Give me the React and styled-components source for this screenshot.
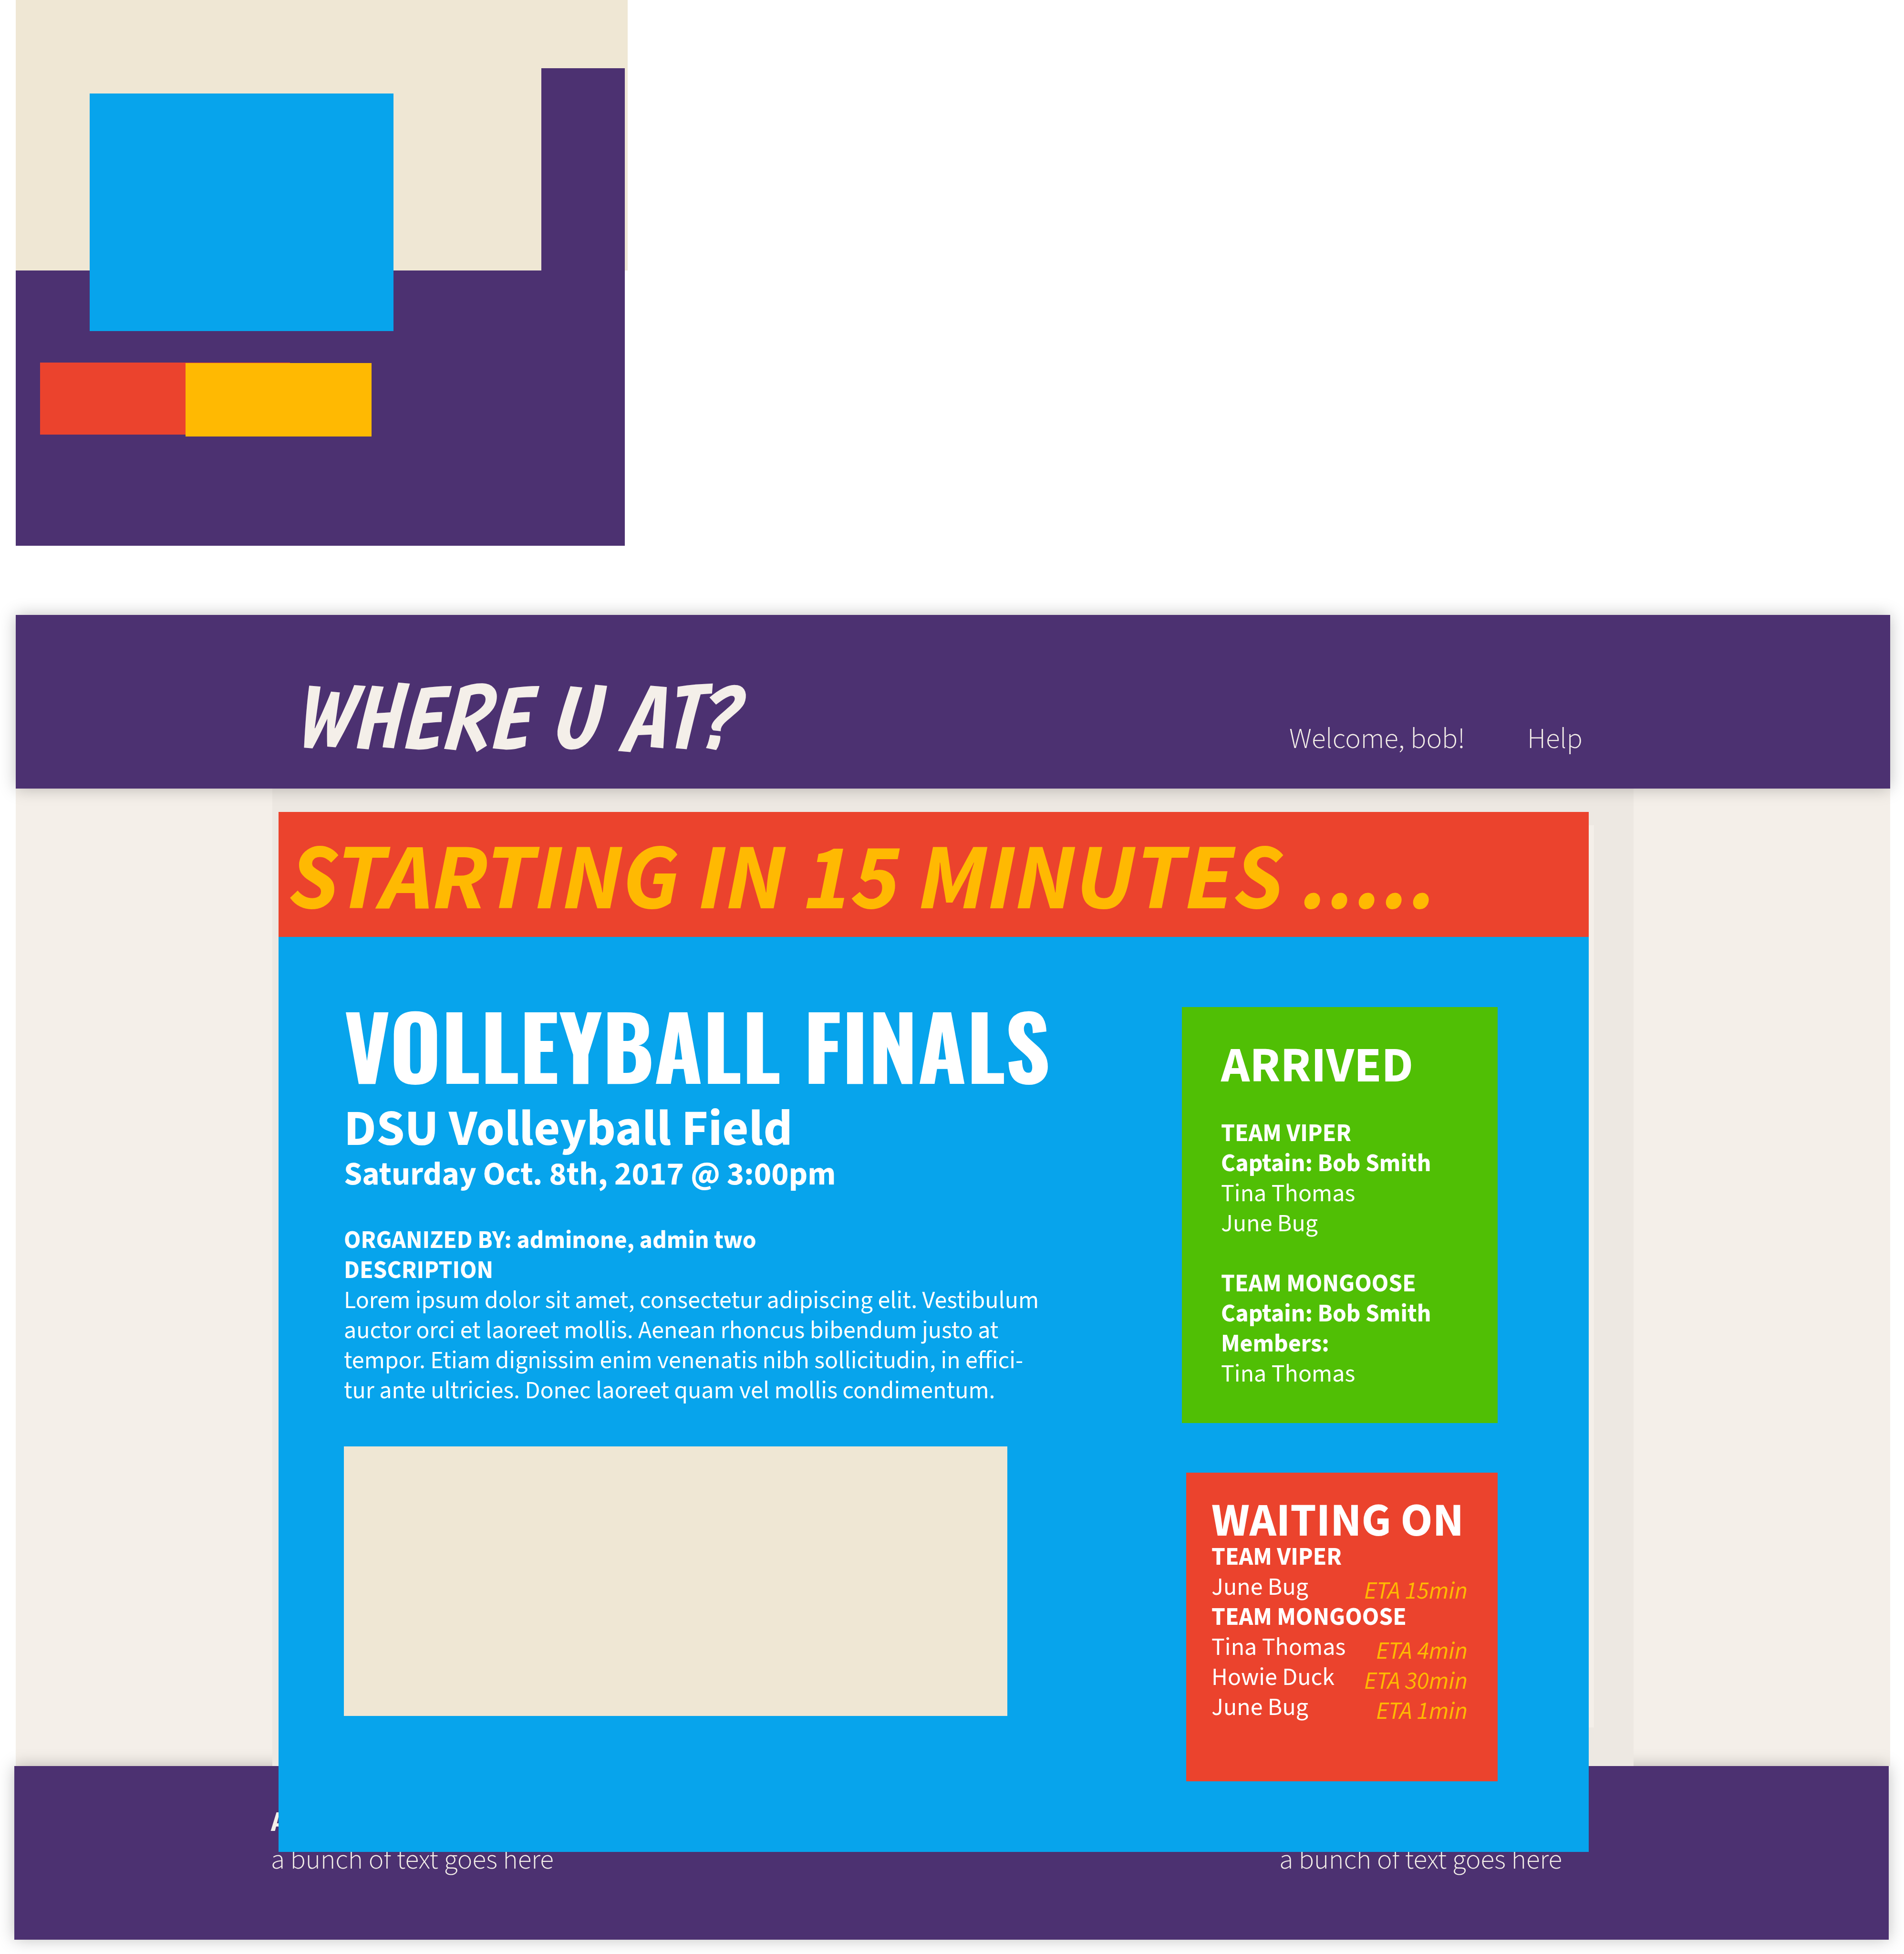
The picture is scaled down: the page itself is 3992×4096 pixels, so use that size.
import React from "react";
import styled, { createGlobalStyle } from "styled-components";

const color = {
  purple: "#4c3171",
  cream: "#efe7d4",
  paper: "#f4efe9",
  band: "#ede8e2",
  blue: "#07a4ec",
  red: "#eb432d",
  yellow: "#ffb902",
  green: "#50bf05",
};

const sans = '"Source Sans Pro", "Source Sans 3", "Noto Sans CJK SC", "Open Sans", sans-serif';
const narrow = `"Oswald", "Roboto Condensed", ${sans}`;
const comic = `"Boogaloo", "Bangers", ${sans}`;

const GlobalStyle = createGlobalStyle`
  *, *::before, *::after { box-sizing: border-box; }
  body { margin: 0; background: #fff; font-family: ${sans}; }
  h1, h2, h3, p { margin: 0; }
`;

const Page = styled.div`
  padding: 0 29px 30px 33px;
  overflow: hidden;
`;

const Palette = styled.section`
  display: grid;
  width: 1283px;
  margin-bottom: 145px;
  grid-template-columns: 51px 104px 201px 219px 171px 46px 310px 175px 6px;
  grid-template-rows: 143px 53px 371px 127px 66px 1px 150px 4px 229px;
`;

const Swatch = styled.div`
  grid-area: ${(p) => p.$area};
  background: ${(p) => color[p.$tone]};
`;

const Bar = styled.div`
  display: flex;
  justify-content: center;
  height: 364px;
  background: ${color.purple};
  color: ${color.paper};
  box-shadow: 0 0 32px rgba(0, 0, 0, 0.25);
`;

const Header = styled(Bar)`
  position: relative;
  z-index: 1;
`;

const Container = styled.div`
  width: 2854px;
  display: flex;
`;

const HeaderRow = styled(Container)`
  align-items: baseline;
  justify-content: space-between;
  padding: 93px 107px 0 37px;
`;

const Logo = styled.h1`
  font: italic 400 189px/240px ${comic};
`;

const Nav = styled.nav`
  display: flex;
  gap: 130px;
`;

const NavLink = styled.a`
  color: inherit;
  text-decoration: none;
  font-weight: 300;
  font-size: 61px;
  line-height: 80px;
`;

const Body = styled.main`
  display: flex;
  justify-content: center;
  background: ${color.paper};
`;

const Band = styled.div`
  display: grid;
  width: 2854px;
  background: ${color.band};
`;

const Sheet = styled.div`
  grid-area: 1 / 1;
  margin: 77px 83px 81px 13px;
  background: ${color.paper};
`;

const Card = styled.article`
  grid-area: 1 / 1;
  position: relative;
  z-index: 2;
  margin: 49px 94px -180px 13px;
  background: ${color.blue};
  color: #fff;
`;

const Alert = styled.p`
  padding: 19px 22px 0;
  background: ${color.red};
  color: ${color.yellow};
  font-size: 196px;
  font-weight: 700;
  font-style: italic;
  line-height: 243px;
  white-space: nowrap;
`;

const Columns = styled.div`
  display: flex;
  justify-content: space-between;
  padding: 147px 191px 148px 137px;
`;

const Details = styled.section`
  width: 1500px;
`;

const Title = styled.h2`
  font: 700 185px/154px ${narrow};
  margin-bottom: 40px;
  white-space: nowrap;
`;

const Place = styled.h3`
  font-size: 107px;
  line-height: 124px;
`;

const When = styled.p`
  font-size: 69px;
  font-weight: 700;
  line-height: 66px;
  margin-bottom: 74px;
`;

const Line = styled.p`
  font-size: 52px;
  line-height: 63px;
  font-weight: ${(p) => (p.$strong ? 700 : 400)};
  white-space: nowrap;
`;

const MapBox = styled.div`
  width: 1391px;
  height: 565px;
  margin-top: 85px;
  background: ${color.cream};
`;

const Side = styled.aside`
  display: flex;
  flex-direction: column;
  align-items: flex-end;
  gap: 104px;
`;

const Panel = styled.section`
  width: ${(p) => p.$width};
  padding: ${(p) => p.$pad};
  background: ${(p) => color[p.$tone]};
`;

const PanelTitle = styled.h3`
  font-size: ${(p) => p.$size};
  line-height: ${(p) => p.$line};
  white-space: nowrap;
`;

const Teams = styled.div`
  display: flex;
  flex-direction: column;
  gap: ${(p) => p.$gap};
  margin-top: ${(p) => p.$top};
`;

const Waiting = styled.div`
  display: flex;
  justify-content: space-between;
`;

const Eta = styled(Line)`
  color: ${color.yellow};
  font-style: italic;
  padding-top: 8px;
  margin-bottom: -8px;
`;

const Footer = styled(Bar)`
  margin: 0 3px 0 -3px;
`;

const FooterRow = styled(Container)`
  justify-content: space-between;
  padding: 79px 147px 0 0;
`;

const FooterBlock = styled.div`
  display: flex;
  flex-direction: column;
  justify-content: flex-end;
  height: 158px;
  font-size: 59px;
  font-weight: 300;
  line-height: 79px;
`;

const FooterHeading = styled.h3`
  font-size: 59px;
`;

const description = [
  "Lorem ipsum dolor sit amet, consectetur adipiscing elit. Vestibulum",
  "auctor orci et laoreet mollis. Aenean rhoncus bibendum justo at",
  "tempor. Etiam dignissim enim venenatis nibh sollicitudin, in effici-",
  "tur ante ultricies. Donec laoreet quam vel mollis condimentum.",
];

const arrived = [
  { team: "TEAM VIPER", bold: ["Captain: Bob Smith"], members: ["Tina Thomas", "June Bug"] },
  { team: "TEAM MONGOOSE", bold: ["Captain: Bob Smith", "Members:"], members: ["Tina Thomas"] },
];

const waiting = [
  { team: "TEAM VIPER", members: [["June Bug", "ETA 15min"]] },
  {
    team: "TEAM MONGOOSE",
    members: [
      ["Tina Thomas", "ETA 4min"],
      ["Howie Duck", "ETA 30min"],
      ["June Bug", "ETA 1min"],
    ],
  },
];

export default function App() {
  return (
    <Page>
      <GlobalStyle />
      <Palette aria-label="Colour palette">
        <Swatch $tone="cream" $area="1 / 1 / 4 / 10" />
        <Swatch $tone="purple" $area="4 / 1 / 10 / 9" />
        <Swatch $tone="purple" $area="2 / 8 / 4 / 9" />
        <Swatch $tone="blue" $area="3 / 3 / 5 / 7" />
        <Swatch $tone="red" $area="6 / 2 / 8 / 5" />
        <Swatch $tone="yellow" $area="7 / 4 / 9 / 6" />
      </Palette>

      <Header as="header">
        <HeaderRow>
          <Logo>WHERE U AT?</Logo>
          <Nav>
            <NavLink href="#account">Welcome, bob!</NavLink>
            <NavLink href="#help">Help</NavLink>
          </Nav>
        </HeaderRow>
      </Header>

      <Body>
        <Band>
          <Sheet />
          <Card>
            <Alert>STARTING IN 15 MINUTES .....</Alert>
            <Columns>
              <Details>
                <Title>VOLLEYBALL FINALS</Title>
                <Place>DSU Volleyball Field</Place>
                <When>Saturday Oct. 8th, 2017 @ 3:00pm</When>
                <Line $strong>ORGANIZED BY: adminone, admin two</Line>
                <Line $strong>DESCRIPTION</Line>
                {description.map((line) => (
                  <Line key={line}>{line}</Line>
                ))}
                <MapBox />
              </Details>
              <Side>
                <Panel $tone="green" $width="662px" $pad="60px 80px 71px 82px">
                  <PanelTitle $size="105px" $line="127px">ARRIVED</PanelTitle>
                  <Teams $gap="63px" $top="47px">
                    {arrived.map((group) => (
                      <div key={group.team}>
                        <Line $strong>{group.team}</Line>
                        {group.bold.map((text) => (
                          <Line key={text} $strong>{text}</Line>
                        ))}
                        {group.members.map((name) => (
                          <Line key={name}>{name}</Line>
                        ))}
                      </div>
                    ))}
                  </Teams>
                </Panel>
                <Panel $tone="red" $width="653px" $pad="57px 63px 123px 53px">
                  <PanelTitle $size="98px" $line="89px">WAITING ON</PanelTitle>
                  <Teams $gap="0" $top="0">
                    {waiting.map((group) => (
                      <div key={group.team}>
                        <Line $strong>{group.team}</Line>
                        {group.members.map(([name, eta]) => (
                          <Waiting key={name}>
                            <Line>{name}</Line>
                            <Eta>{eta}</Eta>
                          </Waiting>
                        ))}
                      </div>
                    ))}
                  </Teams>
                </Panel>
              </Side>
            </Columns>
          </Card>
        </Band>
      </Body>

      <Footer as="footer">
        <FooterRow>
          <FooterBlock>
            <FooterHeading>About</FooterHeading>
            <p>a bunch of text goes here</p>
          </FooterBlock>
          <FooterBlock>
            <p>a bunch of text goes here</p>
          </FooterBlock>
        </FooterRow>
      </Footer>
    </Page>
  );
}
